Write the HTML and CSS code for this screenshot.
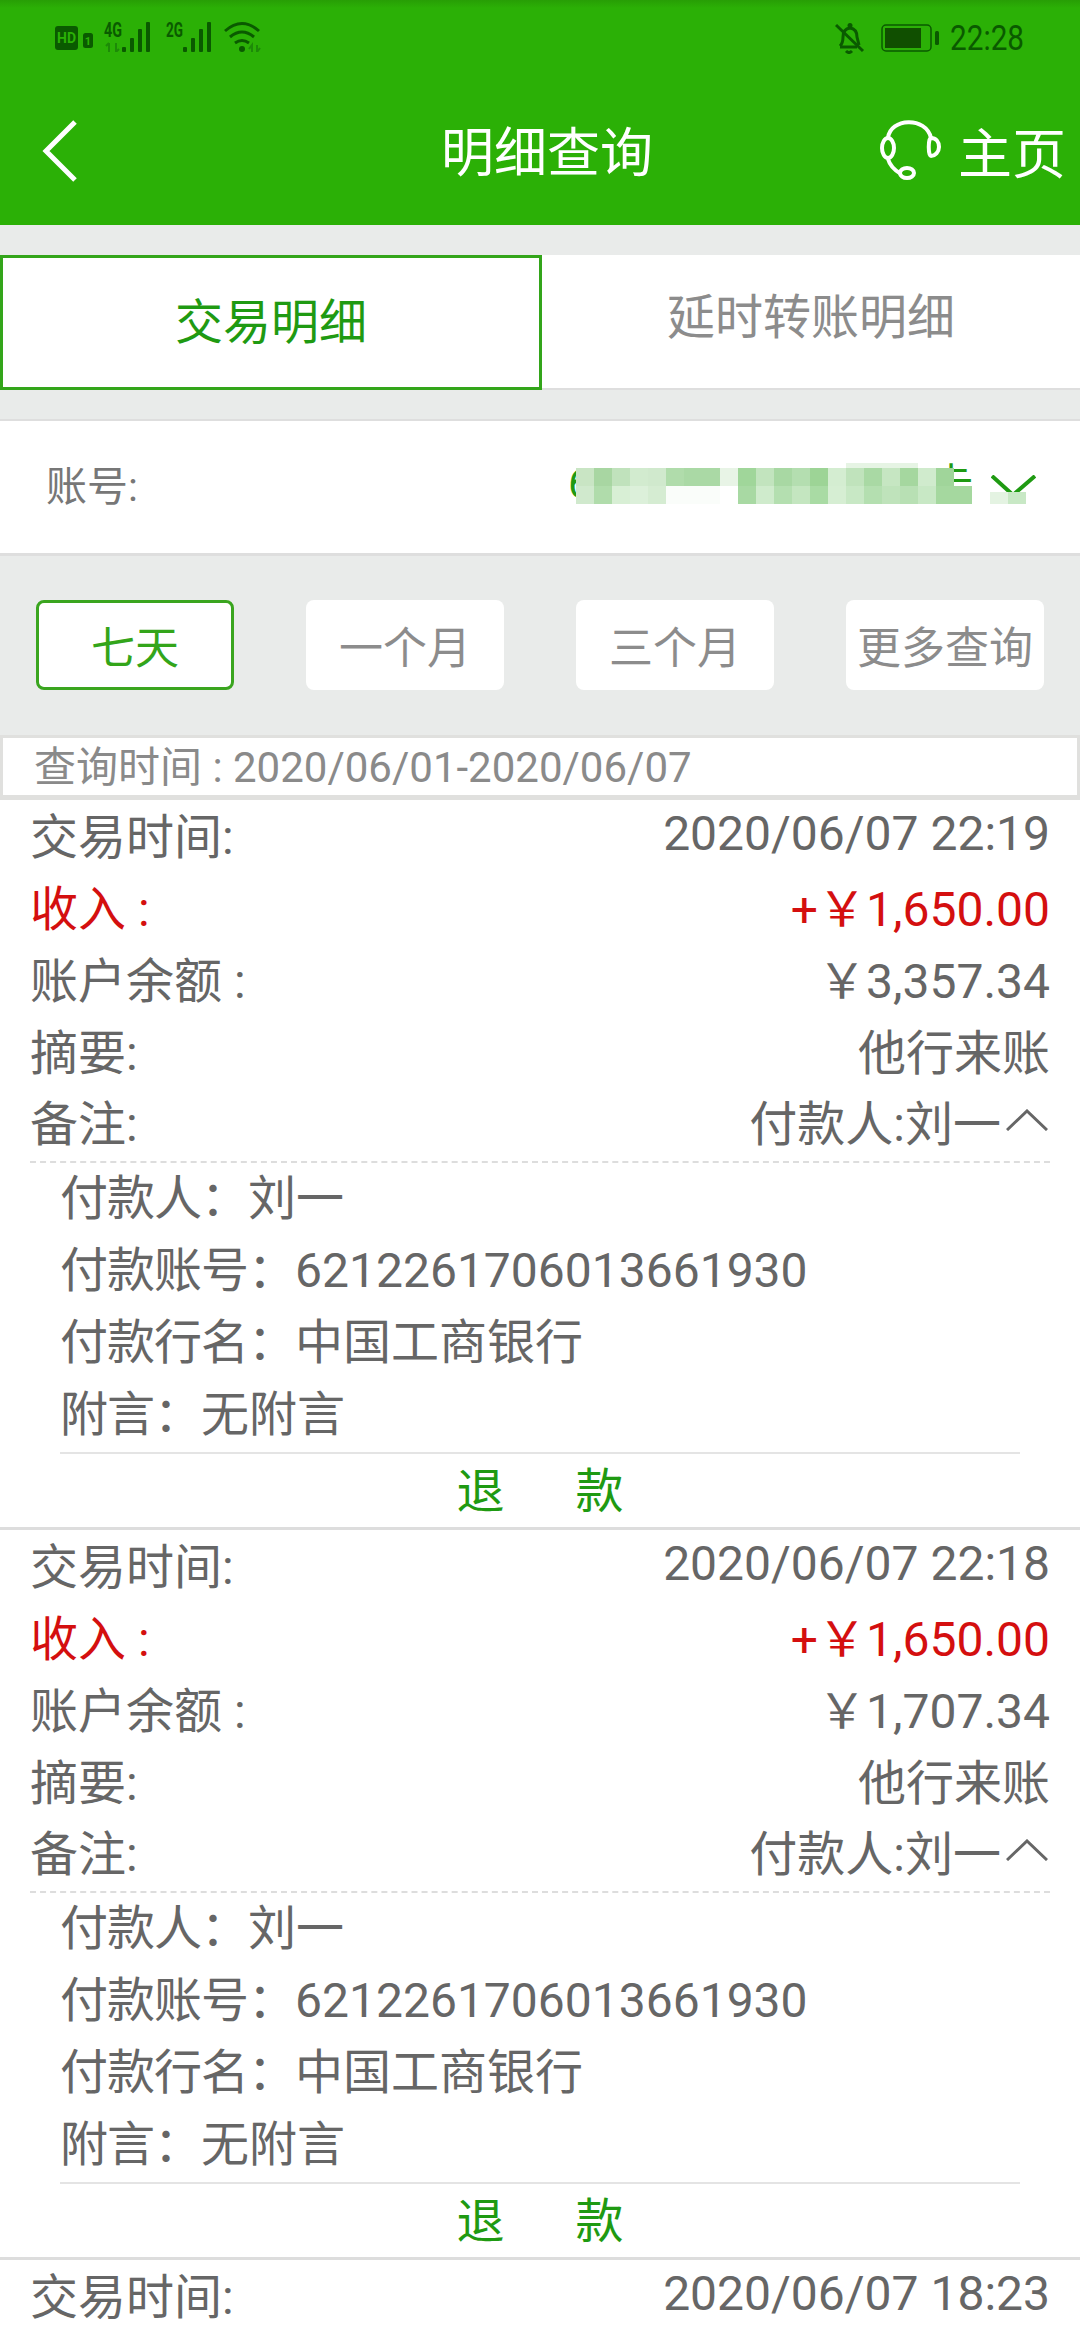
FILE: index.html
```html
<!DOCTYPE html>
<html>
  <head>
    <meta charset="utf-8">
    <title>明细查询</title>
    <link rel="stylesheet" href="styles.css">
  </head>
  <body>
    <header class="top">
      <div class="status">
        <svg class="status-left" width="206" height="34" viewBox="0 -4 206 34">
          <rect x="0" y="4" width="23" height="24" rx="3" fill="#0a5a00"/>
          <text x="11.5" y="21" class="st-hd" text-anchor="middle">HD</text>
          <rect x="28" y="11" width="10" height="15" rx="2.5" fill="#0a5a00"/>
          <text x="33" y="23" class="st-sim" text-anchor="middle">1</text>
          <text x="49" y="15" class="st-net" textLength="18" lengthAdjust="spacingAndGlyphs">4G</text>
          <path d="M54 21v9M51 24l3-3M61 21v9l3-3" fill="none" stroke="#1d8a08" stroke-width="2"/>
          <rect x="67" y="25" width="4" height="5" rx="1" fill="#0a5a00"/>
          <rect x="75" y="16" width="4" height="14" rx="1" fill="#0a5a00"/>
          <rect x="83" y="7" width="4" height="23" rx="1" fill="#0a5a00"/>
          <rect x="91" y="0" width="4" height="30" rx="1" fill="#0a5a00"/>
          <text x="111" y="15" class="st-net" textLength="17" lengthAdjust="spacingAndGlyphs">2G</text>
          <rect x="128" y="25" width="4" height="5" rx="1" fill="#0a5a00"/>
          <rect x="136" y="16" width="4" height="14" rx="1" fill="#0a5a00"/>
          <rect x="144" y="7" width="4" height="23" rx="1" fill="#0a5a00"/>
          <rect x="152" y="0" width="4" height="30" rx="1" fill="#0a5a00"/>
          <path d="M170 9q17-15 34 0M175 15q12-10 24 0M180 21q7-5 14 0" fill="none" stroke="#0a5a00" stroke-width="3"/>
          <circle cx="187" cy="27" r="3" fill="#0a5a00"/>
          <path d="M197 30v-7l-3 4M202 23v7l3-4" fill="none" stroke="#1d8a08" stroke-width="2"/>
        </svg>
        <div class="status-right">
          <svg width="30" height="32" viewBox="0 0 30 32">
            <path d="M5 24q3-3 3-9q0-8 7-9q7 1 7 9l2 8M5 25h17M11 29q3 3 6 0" fill="none" stroke="#0a5a00" stroke-width="3"/>
            <circle cx="15" cy="3.500" r="2.500" fill="#0a5a00"/>
            <path d="M1 3l27 26" stroke="#0a5a00" stroke-width="3"/>
          </svg>
          <svg class="battery" width="58" height="28" viewBox="0 0 58 28">
            <rect x="1" y="1" width="49" height="26" rx="4" fill="none" stroke="#0a5a00" stroke-width="1.500"/>
            <rect x="4" y="4" width="36" height="20" fill="#104f00"/>
            <rect x="54" y="7" width="4" height="14" rx="1.500" fill="#0a5a00"/>
          </svg>
          <span class="clock">22:28</span>
        </div>
      </div>
      <nav class="bar">
        <svg class="back" width="38" height="64" viewBox="0 0 38 64">
          <path d="M34 3L5 32l29 29" fill="none" stroke="#fff" stroke-width="5"/>
        </svg>
        <h1 class="title">明细查询</h1>
        <div class="home">
          <svg width="62" height="62" viewBox="0 0 62 62">
            <path d="M9 19C11 -1 47 -3 52 19M9 40c2 7 6 11 13 15" fill="none" stroke="#fff" stroke-width="4"/>
            <ellipse cx="9" cy="29" rx="6" ry="10" fill="none" stroke="#fff" stroke-width="4"/>
            <path d="M52 19c5 0 8 4 8 9s-4 9-8 9c-3 0-3-18 0-18z" fill="none" stroke="#fff" stroke-width="4"/>
            <ellipse cx="28" cy="54" rx="7" ry="5" fill="none" stroke="#fff" stroke-width="4"/>
          </svg>
          <span>主页</span>
        </div>
      </nav>
    </header>

    <div class="tabs">
      <div class="tab tab-on">交易明细</div>
      <div class="tab">延时转账明细</div>
    </div>

    <div class="account">
      <span class="acct-label">账号:</span>
      <div class="acct-val"><span class="acct-first">6</span><span>卡</span></div>
      <svg class="acct-arrow" width="45" height="22" viewBox="0 0 45 22">
        <path d="M1 1l21 19L44 1" fill="none" stroke="#1f9a12" stroke-width="4"/>
      </svg>
      <svg class="mosaic" width="470" height="50" viewBox="0 0 470 50">
        <rect x="276" y="0" width="72" height="5" fill="#e6f4e4"/>
        <g>
          <rect x="6" y="5" width="18" height="18" fill="#c9e5c4"/>
          <rect x="24" y="5" width="18" height="18" fill="#a8d6a2"/>
          <rect x="42" y="5" width="18" height="18" fill="#c0e2bc"/>
          <rect x="60" y="5" width="18" height="18" fill="#d2ebcf"/>
          <rect x="78" y="5" width="18" height="18" fill="#d0e9cd"/>
          <rect x="96" y="5" width="18" height="18" fill="#b0dcab"/>
          <rect x="114" y="5" width="18" height="18" fill="#aad9a5"/>
          <rect x="132" y="5" width="18" height="18" fill="#aad9a5"/>
          <rect x="150" y="5" width="18" height="18" fill="#e8f4e6"/>
          <rect x="168" y="5" width="18" height="18" fill="#a0d69a"/>
          <rect x="186" y="5" width="18" height="18" fill="#c2e4be"/>
          <rect x="204" y="5" width="18" height="18" fill="#a8d8a3"/>
          <rect x="222" y="5" width="18" height="18" fill="#b4deb0"/>
          <rect x="240" y="5" width="18" height="18" fill="#9dd496"/>
          <rect x="258" y="5" width="18" height="18" fill="#d4edd1"/>
          <rect x="276" y="5" width="18" height="18" fill="#c0e3bc"/>
          <rect x="294" y="5" width="18" height="18" fill="#a9d9a4"/>
          <rect x="312" y="5" width="18" height="18" fill="#c6e6c2"/>
          <rect x="330" y="5" width="18" height="18" fill="#a5d79f"/>
          <rect x="348" y="5" width="18" height="18" fill="#d0ebcd"/>
          <rect x="366" y="5" width="18" height="18" fill="#a0d59a"/>
        </g>
        <g>
          <rect x="6" y="23" width="18" height="18" fill="#d0e9cd"/>
          <rect x="24" y="23" width="18" height="18" fill="#b0dcab"/>
          <rect x="42" y="23" width="18" height="18" fill="#d8efd5"/>
          <rect x="60" y="23" width="18" height="18" fill="#dcf0da"/>
          <rect x="78" y="23" width="18" height="18" fill="#d5ecd2"/>
          <rect x="96" y="23" width="54" height="18" fill="#fafdfa"/>
          <rect x="150" y="23" width="18" height="18" fill="#ffffff"/>
          <rect x="168" y="23" width="18" height="18" fill="#a8d9a3"/>
          <rect x="186" y="23" width="18" height="18" fill="#cfebcc"/>
          <rect x="204" y="23" width="18" height="18" fill="#b4dfb0"/>
          <rect x="222" y="23" width="18" height="18" fill="#c4e6c0"/>
          <rect x="240" y="23" width="18" height="18" fill="#a9dba4"/>
          <rect x="258" y="23" width="18" height="18" fill="#d6eed3"/>
          <rect x="276" y="23" width="18" height="18" fill="#c8e8c5"/>
          <rect x="294" y="23" width="18" height="18" fill="#b4dfb0"/>
          <rect x="312" y="23" width="18" height="18" fill="#bfe3bb"/>
          <rect x="330" y="23" width="18" height="18" fill="#b8e0b4"/>
          <rect x="348" y="23" width="18" height="18" fill="#c8e8c5"/>
          <rect x="366" y="23" width="36" height="18" fill="#a5d89f"/>
          <rect x="420" y="29" width="18" height="12" fill="#e4f3e2"/>
          <rect x="438" y="29" width="18" height="12" fill="#c8e8c5"/>
        </g>
      </svg>
    </div>

    <div class="ranges">
      <div class="range range-on">七天</div>
      <div class="range">一个月</div>
      <div class="range">三个月</div>
      <div class="range">更多查询</div>
    </div>

    <div class="query">查询时间 : 2020/06/01-2020/06/07</div>

    <section class="record">
      <div class="row"><span>交易时间:</span><span>2020/06/07 22:19</span></div>
      <div class="row red"><span>收入 :</span><span>+￥1,650.00</span></div>
      <div class="row"><span>账户余额 :</span><span>￥3,357.34</span></div>
      <div class="row"><span>摘要:</span><span>他行来账</span></div>
      <div class="row row-note">
        <span>备注:</span>
        <span class="note">付款人:刘一
          <svg width="42" height="22" viewBox="0 0 42 22"><path d="M1 21L21 2l20 19" fill="none" stroke="#666" stroke-width="3"/></svg>
        </span>
      </div>
      <div class="detail">
        <div class="line"><span class="tight">付款人&#65306;</span>刘一</div>
        <div class="line"><span class="tight">付款账号&#65306;</span>6212261706013661930</div>
        <div class="line"><span class="tight">付款行名&#65306;</span>中国工商银行</div>
        <div class="line"><span class="tight">附言&#65306;</span>无附言</div>
      </div>
      <div class="refund"><span>退</span><span>款</span></div>
    </section>

    <section class="record">
      <div class="row"><span>交易时间:</span><span>2020/06/07 22:18</span></div>
      <div class="row red"><span>收入 :</span><span>+￥1,650.00</span></div>
      <div class="row"><span>账户余额 :</span><span>￥1,707.34</span></div>
      <div class="row"><span>摘要:</span><span>他行来账</span></div>
      <div class="row row-note">
        <span>备注:</span>
        <span class="note">付款人:刘一
          <svg width="42" height="22" viewBox="0 0 42 22"><path d="M1 21L21 2l20 19" fill="none" stroke="#666" stroke-width="3"/></svg>
        </span>
      </div>
      <div class="detail">
        <div class="line"><span class="tight">付款人&#65306;</span>刘一</div>
        <div class="line"><span class="tight">付款账号&#65306;</span>6212261706013661930</div>
        <div class="line"><span class="tight">付款行名&#65306;</span>中国工商银行</div>
        <div class="line"><span class="tight">附言&#65306;</span>无附言</div>
      </div>
      <div class="refund"><span>退</span><span>款</span></div>
    </section>

    <section class="record record-last">
      <div class="row"><span>交易时间:</span><span>2020/06/07 18:23</span></div>
    </section>
  </body>
</html>
```

FILE: styles.css
```css
html, body { margin: 0; padding: 0; }
body { width: 1080px; height: 2340px; overflow: hidden; background: #e9ebea; color: #666; font-family: Roboto, "Noto Sans CJK SC", sans-serif; font-size: 48px; }

.top { background: linear-gradient(#279e05, #2bb006 8px); height: 225px; }
.status { height: 75px; box-sizing: border-box; padding: 18px 56px 0 55px; display: flex; justify-content: space-between; align-items: flex-start; }
.status-right { display: flex; align-items: center; height: 32px; margin-top: 4px; }
.battery { margin-left: 16px; }
.clock { width: 74px; margin-left: 11px; color: #0a5a00; font-size: 35px; white-space: nowrap; transform: scaleX(.85); transform-origin: left center; }
.st-hd { fill: #2bb006; font: bold 14px Roboto, sans-serif; }
.st-sim { fill: #2bb006; font: bold 11px Roboto, sans-serif; }
.st-net { fill: #0a5a00; font: bold 20px Roboto, sans-serif; }

.bar { height: 150px; padding: 0 14px 0 41px; display: flex; align-items: center; justify-content: space-between; color: #fff; position: relative; }
.back { margin-top: 2px; }
.title { margin: 0; position: absolute; left: 14px; right: 0; text-align: center; font-size: 53px; font-weight: normal; padding-bottom: 2px; }
.home { display: flex; align-items: center; gap: 17px; font-size: 54px; position: relative; }

.tabs { margin-top: 30px; height: 135px; box-sizing: border-box; background: #fff; border-bottom: 2px solid #dedede; display: flex; }
.tab { flex: 1; display: flex; align-items: center; justify-content: center; color: #8c8c8c; padding-bottom: 18px; box-sizing: border-box; }
.tab-on { flex: none; width: 542px; height: 135px; border: 3px solid #33a51a; color: #1f9a12; padding-bottom: 9px; }

.account { margin-top: 29px; height: 137px; box-sizing: border-box; background: #fff; border-top: 2px solid #dedede; border-bottom: 3px solid #dedede; display: flex; align-items: center; padding: 0 44px 0 46px; position: relative; color: #777; }
.acct-label { font-size: 41px; width: 524px; padding-bottom: 9px; }
.acct-val { width: 405px; margin: 0 18px 0 -2px; display: flex; justify-content: space-between; align-items: flex-start; color: #1f9a12; font-size: 42px; padding-bottom: 14px; }
.acct-first { margin-top: 9px; }
.acct-arrow { margin-top: -2px; }
.mosaic { position: absolute; left: 570px; top: 42px; }

.ranges { display: flex; justify-content: space-between; padding: 44px 36px 45px; }
.range { width: 198px; height: 90px; box-sizing: border-box; background: #fff; border-radius: 8px; display: flex; align-items: center; justify-content: center; color: #8c8c8c; font-size: 44px; }
.range-on { border: 3px solid #3aa51f; color: #33a51a; }

.query { height: 65px; box-sizing: border-box; background: #fff; border: 3px solid #e0e0de; border-bottom-width: 5px; padding-left: 31px; line-height: 59px; color: #8a8a8a; font-size: 42px; }

.record { background: #fff; border-bottom: 3px solid #dddddd; }
.record-last { height: 80px; border-bottom: 0; }
.row { height: 72px; margin: 0 30px; padding-bottom: 6px; box-sizing: border-box; display: flex; align-items: center; justify-content: space-between; }
.red { color: #d40f0f; }
.row-note { height: 75px; padding-bottom: 9px; border-bottom: 2px dashed #dddddd; }
.note { display: flex; align-items: center; gap: 5px; }
.note svg { margin-right: 2px; }
.detail { margin: 0 60px; padding-bottom: 1px; border-bottom: 2px solid #e4e4e4; }
.line { height: 72px; line-height: 72px; }
.tight { letter-spacing: -1px; }
.refund { height: 73px; padding-bottom: 8px; box-sizing: border-box; display: flex; align-items: center; justify-content: center; gap: 71px; color: #1f9a12; }
```
